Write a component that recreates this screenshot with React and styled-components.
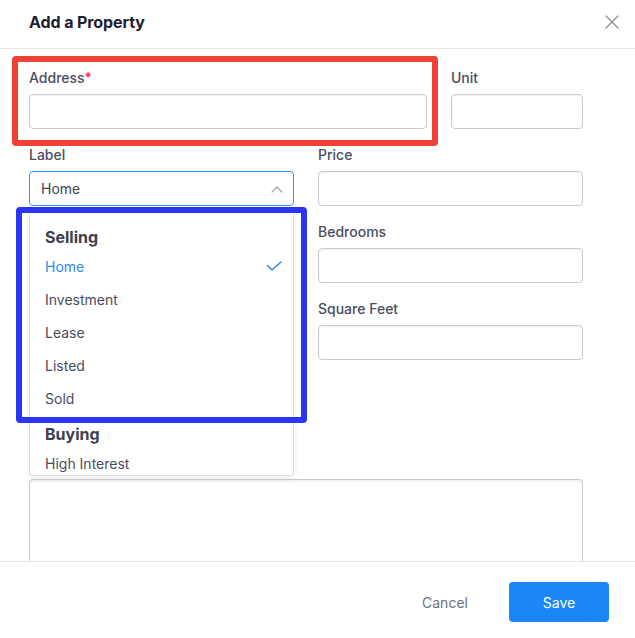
import React from "react";
import styled, { createGlobalStyle } from "styled-components";

const Global = createGlobalStyle`
  html, body { margin: 0; padding: 0; background: #ffffff; }
  body { font-family: Inter, "Noto Sans", "Liberation Sans", sans-serif; -webkit-font-smoothing: antialiased; }
  * { box-sizing: border-box; }
`;

const Modal = styled.div`
  width: 635px;
  height: 638px;
  display: flex;
  flex-direction: column;
  background: #fff;
  overflow: hidden;
`;

const Header = styled.header`
  height: 49px;
  flex: none;
  display: flex;
  align-items: center;
  justify-content: space-between;
  padding: 0 16px 4px 29px;
  border-bottom: 1px solid #e6e7ec;
`;

const Title = styled.h2`
  margin: 0;
  font-size: 16px;
  font-weight: 700;
  color: #1e2030;
  letter-spacing: -0.1px;
`;

const CloseButton = styled.button`
  border: 0;
  background: none;
  padding: 0;
  width: 14px;
  height: 14px;
  display: flex;
  cursor: pointer;
`;

const Body = styled.div`
  flex: 1;
  overflow: hidden;
  padding: 19px 52px 0 29px;
  display: flex;
  flex-direction: column;
  gap: 16px;
`;

const Row = styled.div`
  display: grid;
  grid-template-columns: ${(p) => p.$cols || "1fr 1fr"};
  column-gap: 24px;
`;

const Field = styled.div`
  position: relative;
  display: flex;
  flex-direction: column;
`;

const Label = styled.label`
  font-size: 14px;
  line-height: 20px;
  height: 20px;
  margin-bottom: 6px;
  color: #4a4d5d;
  font-weight: 500;
`;

const LabelSpace = styled.div`
  height: 26px;
`;

const Required = styled.span`
  color: #f0313c;
`;

const Input = styled.input`
  height: 35px;
  border: 1px solid #c9cad3;
  border-radius: 4px;
  box-shadow: inset 0 1px 2px rgba(0, 0, 0, 0.07);
  font-family: inherit;
  font-size: 14px;
  padding: 0 11px;
  outline: none;
`;

const Blank = styled.div`
  height: 61px;
`;

const TextArea = styled.textarea`
  height: 110px;
  border: 1px solid #c9cad3;
  border-radius: 4px;
  box-shadow: inset 0 2px 2px rgba(0, 0, 0, 0.05);
  resize: none;
  font-family: inherit;
  outline: none;
`;

const SelectBox = styled.div`
  height: 35px;
  border: 1px solid #3a92f5;
  border-radius: 4px;
  display: flex;
  align-items: center;
  justify-content: space-between;
  padding: 0 10px 0 11px;
  font-size: 14px;
  color: #3e4150;
`;

const Menu = styled.div`
  position: absolute;
  left: 0;
  right: 0;
  top: 64px;
  height: 267px;
  overflow: hidden;
  background: #fff;
  border: 1px solid #dcdde3;
  border-radius: 4px;
  box-shadow: 0 2px 6px rgba(0, 0, 0, 0.08);
  padding-top: 14px;
  z-index: 2;
`;

const Group = styled.div`
  display: flex;
  flex-direction: column;
  & + & { margin-top: 6px; }
`;

const GroupTitle = styled.div`
  height: 26px;
  line-height: 26px;
  padding: 0 15px;
  font-size: 16px;
  font-weight: 700;
  color: #3d4050;
`;

const Option = styled.div`
  height: 33px;
  display: flex;
  align-items: center;
  justify-content: space-between;
  padding: 0 11px 0 15px;
  font-size: 14px;
  color: ${(p) => (p.$selected ? "#2a8cf2" : "#4a4d5c")};
`;

const Highlight = styled.div`
  position: absolute;
  top: ${(p) => p.$t}px;
  left: ${(p) => p.$l}px;
  right: ${(p) => p.$r}px;
  bottom: ${(p) => p.$b}px;
  border: 6px solid ${(p) => p.$color};
  border-radius: 4px;
  pointer-events: none;
  z-index: 5;
`;

const Footer = styled.footer`
  flex: none;
  height: 77px;
  border-top: 1px solid #e6e7ec;
  display: flex;
  justify-content: flex-end;
  align-items: flex-start;
  padding: 20px 26px 0 0;
  gap: 14px;
`;

const Button = styled.button`
  height: 40px;
  width: 100px;
  border: 0;
  border-radius: 4px;
  font-family: inherit;
  font-size: 14px;
  cursor: pointer;
  background: ${(p) => (p.$primary ? "#1b86f5" : "transparent")};
  color: ${(p) => (p.$primary ? "#ffffff" : "#6c6f7d")};
`;

const Check = () => (
  <svg width="16" height="12" viewBox="0 0 16 12" fill="none">
    <path d="M1.5 4.5 L6 9 L15 1" stroke="#2a8cf2" strokeWidth="1.5" strokeLinecap="round" strokeLinejoin="round" />
  </svg>
);

const ChevronUp = () => (
  <svg width="12" height="8" viewBox="0 0 12 8" fill="none">
    <path d="M1 7 L6 2 L11 7" stroke="#a0a2ad" strokeWidth="1.2" strokeLinecap="round" strokeLinejoin="round" />
  </svg>
);

const CloseIcon = () => (
  <svg width="14" height="14" viewBox="0 0 14 14" fill="none">
    <path d="M1 1 L13 13 M13 1 L1 13" stroke="#8d909c" strokeWidth="1.4" strokeLinecap="round" />
  </svg>
);

const selling = ["Home", "Investment", "Lease", "Listed", "Sold"];
const buying = ["High Interest"];

export default function App() {
  return (
    <>
      <Global />
      <Modal>
        <Header>
          <Title>Add a Property</Title>
          <CloseButton aria-label="Close">
            <CloseIcon />
          </CloseButton>
        </Header>
        <Body>
          <Row $cols="398px 132px">
            <Field>
              <Label>
                Address<Required>*</Required>
              </Label>
              <Input />
              <Highlight $color="#ef4136" $t={-12} $l={-17} $r={-11} $b={-17} />
            </Field>
            <Field>
              <Label>Unit</Label>
              <Input />
            </Field>
          </Row>
          <Row>
            <Field>
              <Label>Label</Label>
              <SelectBox>
                <span>Home</span>
                <ChevronUp />
              </SelectBox>
              <Menu>
                <Group>
                  <GroupTitle>Selling</GroupTitle>
                  {selling.map((s) => (
                    <Option key={s} $selected={s === "Home"}>
                      {s}
                      {s === "Home" && <Check />}
                    </Option>
                  ))}
                </Group>
                <Group>
                  <GroupTitle>Buying</GroupTitle>
                  {buying.map((s) => (
                    <Option key={s}>{s}</Option>
                  ))}
                </Group>
              </Menu>
              <Highlight $color="#2a35f4" $t={62} $l={-13} $r={-13} $b={-217} />
            </Field>
            <Field>
              <Label>Price</Label>
              <Input />
            </Field>
          </Row>
          <Row>
            <Blank />
            <Field>
              <Label>Bedrooms</Label>
              <Input />
            </Field>
          </Row>
          <Row>
            <Blank />
            <Field>
              <Label>Square Feet</Label>
              <Input />
            </Field>
          </Row>
          <Row>
            <Blank />
            <div />
          </Row>
          <Row $cols="1fr">
            <Field>
              <LabelSpace />
              <TextArea aria-label="Notes" />
            </Field>
          </Row>
        </Body>
        <Footer>
          <Button>Cancel</Button>
          <Button $primary>Save</Button>
        </Footer>
      </Modal>
    </>
  );
}
